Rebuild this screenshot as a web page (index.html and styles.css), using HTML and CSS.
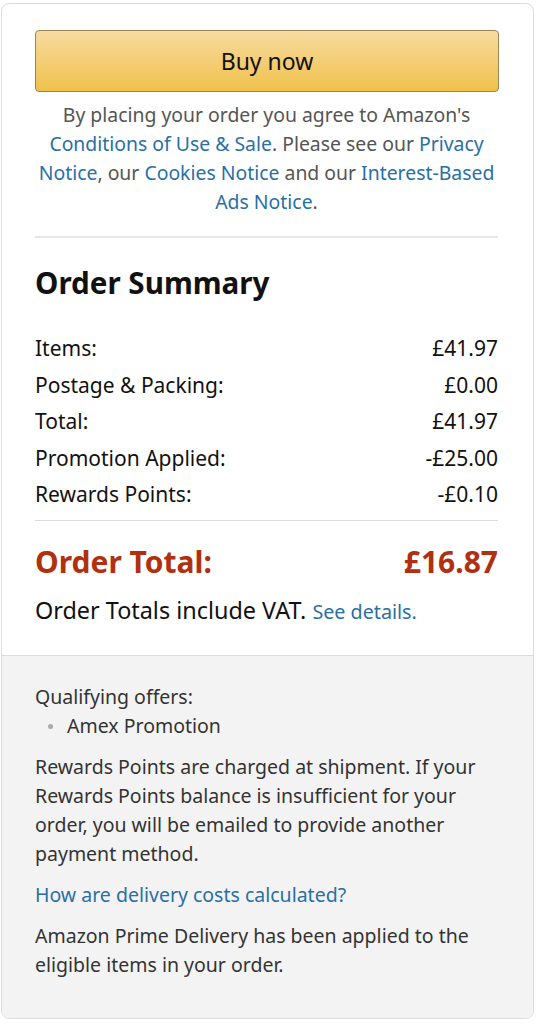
FILE: index.html
```html
<!DOCTYPE html>
<html>
<head>
<meta charset="utf-8">
<link rel="stylesheet" href="styles.css">
</head>
<body>
<div class="box">
  <div class="top">
    <button class="buy">Buy now</button>
    <p class="legal">By placing your order you agree to Amazon's <a href="#">Conditions of Use &amp; Sale</a>. Please see our <a href="#">Privacy Notice</a>, our <a href="#">Cookies Notice</a> and our <a href="#">Interest-Based Ads Notice</a>.</p>
    <hr class="rule">
    <h2 class="title">Order Summary</h2>
    <div class="rows">
      <div class="row"><span>Items:</span><span>£41.97</span></div>
      <div class="row"><span>Postage &amp; Packing:</span><span>£0.00</span></div>
      <div class="row"><span>Total:</span><span>£41.97</span></div>
      <div class="row"><span>Promotion Applied:</span><span>-£25.00</span></div>
      <div class="row"><span>Rewards Points:</span><span>-£0.10</span></div>
    </div>
    <hr class="rule rule2">
    <div class="total"><span>Order Total:</span><span>£16.87</span></div>
    <p class="vat">Order Totals include VAT. <a href="#">See details.</a></p>
  </div>
  <div class="bottom">
    <p class="q">Qualifying offers:</p>
    <ul class="offers"><li>Amex Promotion</li></ul>
    <p class="para">Rewards Points are charged at shipment. If your Rewards Points balance is insufficient for your order, you will be emailed to provide another payment method.</p>
    <p class="para"><a href="#">How are delivery costs calculated?</a></p>
    <p class="para">Amazon Prime Delivery has been applied to the eligible items in your order.</p>
  </div>
</div>
</body>
</html>
```
FILE: styles.css
```css
* { box-sizing: border-box; }
body {
  margin: 0;
  background: #fff;
  font-family: "Noto Sans", "Open Sans", sans-serif;
  color: #111;
}
a { color: #2a6fa5; text-decoration: none; }
.box {
  margin: 3px 0 0 1px;
  width: 533px;
  height: 1016px;
  border: 1px solid #dcdcdc;
  border-radius: 8px;
  overflow: hidden;
  display: flex;
  flex-direction: column;
}
.top {
  padding: 26px 35px 0 33px;
}
.buy {
  display: block;
  width: 464px;
  height: 62px;
  border: 1px solid #9c8550;
  border-radius: 4px;
  background: linear-gradient(#f7dba0, #f0c14b);
  font-family: inherit;
  font-size: 23px;
  color: #111;
}
.legal {
  margin: 8px 0 0;
  text-align: center;
  font-size: 19.4px;
  line-height: 29px;
  color: #555;
}
.rule {
  border: 0;
  border-top: 2px solid #e7e7e7;
  margin: 20px 0 0;
}
.title {
  margin: 25px 0 0;
  font-size: 29.6px;
  font-weight: 700;
  line-height: 40px;
}
.rows { margin-top: 27px; }
.row {
  display: flex;
  justify-content: space-between;
  font-size: 21px;
  line-height: 36.6px;
  color: #111;
}
.rule2 { margin-top: 7px; border-top-width: 1px; border-color: #ddd; }
.total {
  display: flex;
  justify-content: space-between;
  margin-top: 21px;
  font-size: 30px;
  font-weight: 700;
  color: #b1300f;
  line-height: 40px;
}
.vat {
  margin: 12px 0 0;
  font-size: 23.4px;
  line-height: 32px;
  color: #111;
}
.vat a { font-size: 19.7px; }
.bottom {
  flex: 1;
  margin-top: 27px;
  background: #f3f3f3;
  border-top: 1px solid #dcdcdc;
  padding: 26px 35px 0 33px;
  font-size: 19.5px;
  line-height: 29px;
  color: #333;
}
.q { margin: 0; }
.offers {
  margin: 0;
  padding-left: 32px;
  list-style: none;
}
.offers li { position: relative; }
.offers li::before {
  content: "";
  position: absolute;
  left: -19px;
  top: 13px;
  width: 5px;
  height: 5px;
  border-radius: 50%;
  background: #aaa;
}
.para { margin: 12px 0 0; }
```
